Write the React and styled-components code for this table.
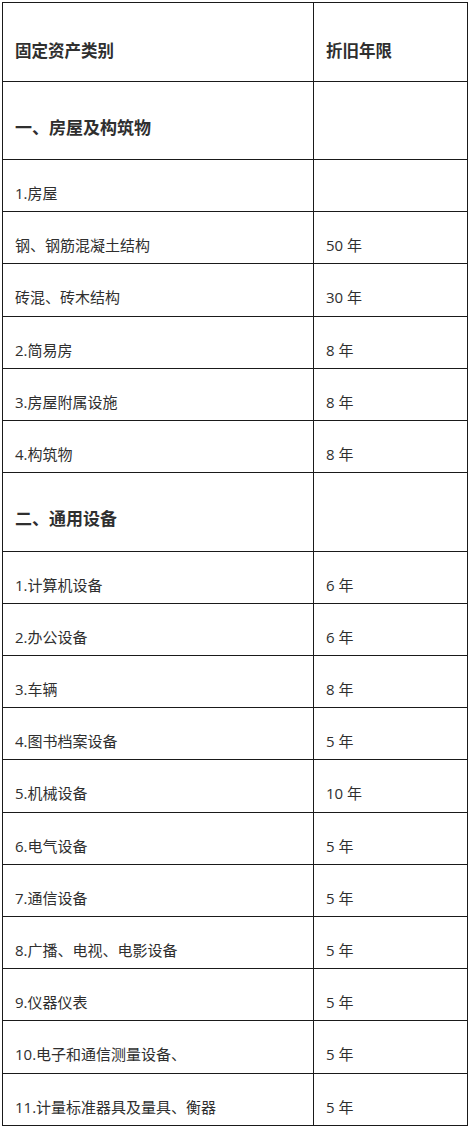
import React from "react";
import styled, { createGlobalStyle } from "styled-components";

const GlobalStyle = createGlobalStyle`
  html, body {
    margin: 0;
    padding: 0;
    background: #ffffff;
  }
  body {
    font-family: "Open Sans", "Noto Sans CJK SC", sans-serif;
    color: #333333;
  }
`;

const Page = styled.div`
  padding: 2px 0 0 2px;
`;

const Table = styled.table`
  width: 466px;
  border-collapse: collapse;
  table-layout: fixed;
`;

const Row = styled.tr`
  height: ${(p) => (p.$bold ? "78.5px" : "52.2px")};
`;

const Cell = styled.td`
  border: 1px solid #1a1a1a;
  vertical-align: top;
  padding: ${(p) => p.$top}px 12px 0;
  font-size: ${(p) => p.$size}px;
  line-height: ${(p) => (p.$bold ? "26px" : "24px")};
  font-weight: ${(p) => (p.$bold ? 700 : 400)};
  color: #2f2f2f;
  white-space: nowrap;
`;

const NameCol = styled.col`
  width: 311px;
`;

const rows = [
  { name: "一、房屋及构筑物", years: "", bold: true },
  { name: "1.房屋", years: "" },
  { name: "钢、钢筋混凝土结构", years: "50 年" },
  { name: "砖混、砖木结构", years: "30 年" },
  { name: "2.简易房", years: "8 年" },
  { name: "3.房屋附属设施", years: "8 年" },
  { name: "4.构筑物", years: "8 年" },
  { name: "二、通用设备", years: "", bold: true },
  { name: "1.计算机设备", years: "6 年" },
  { name: "2.办公设备", years: "6 年" },
  { name: "3.车辆", years: "8 年" },
  { name: "4.图书档案设备", years: "5 年" },
  { name: "5.机械设备", years: "10 年" },
  { name: "6.电气设备", years: "5 年" },
  { name: "7.通信设备", years: "5 年" },
  { name: "8.广播、电视、电影设备", years: "5 年" },
  { name: "9.仪器仪表", years: "5 年" },
  { name: "10.电子和通信测量设备、", years: "5 年" },
  { name: "11.计量标准器具及量具、衡器", years: "5 年" },
];

const App = () => {
  return (
    <Page>
      <GlobalStyle />
      <Table>
        <colgroup>
          <NameCol />
          <col />
        </colgroup>
        <tbody>
          <Row $bold>
            <Cell $bold $size={16.5} $top={35}>固定资产类别</Cell>
            <Cell $bold $size={16.5} $top={35}>折旧年限</Cell>
          </Row>
          {rows.map((r, i) => (
            <Row key={i} $bold={r.bold}>
              <Cell $bold={r.bold} $size={r.bold ? 17 : 15} $top={r.bold ? 33 : 21}>
                {r.name}
              </Cell>
              <Cell $bold={r.bold} $size={r.bold ? 17 : 15} $top={r.bold ? 33 : 21}>
                {r.years}
              </Cell>
            </Row>
          ))}
        </tbody>
      </Table>
    </Page>
  );
};

export default App;
